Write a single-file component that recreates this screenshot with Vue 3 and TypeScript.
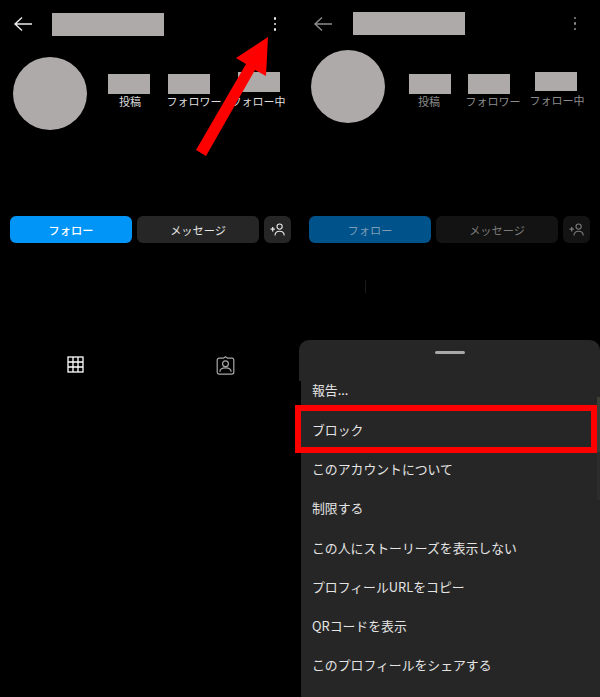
<script setup lang="ts">
interface Panel {
  key: string
  stats: string[]
}
const labels = ['投稿', 'フォロワー', 'フォロー中']
const panels: Panel[] = [
  { key: 'active', stats: labels },
  { key: 'dimmed', stats: labels },
]
const menu = [
  '報告...',
  'ブロック',
  'このアカウントについて',
  '制限する',
  'この人にストーリーズを表示しない',
  'プロフィールURLをコピー',
  'QRコードを表示',
  'このプロフィールをシェアする',
]
</script>

<template>
  <div class="page">
    <section v-for="panel in panels" :key="panel.key" class="panel" :class="panel.key">
      <header class="header">
        <svg class="back" width="20" height="16" viewBox="0 0 20 16" fill="none">
          <path d="M19 8H2M9 1.400 2 8l7 6.600" stroke="currentColor" stroke-width="1.400" />
        </svg>
        <div class="mask title"></div>
        <div class="kebab"><i></i><i></i><i></i></div>
      </header>

      <div class="profile">
        <div class="avatar"></div>
        <div class="stats">
          <div v-for="label in panel.stats" :key="label" class="stat">
            <div class="mask count"></div>
            <span>{{ label }}</span>
          </div>
        </div>
      </div>

      <div class="actions">
        <button class="btn primary">フォロー</button>
        <button class="btn">メッセージ</button>
        <button class="btn icon" aria-label="add">
          <svg width="16" height="14" viewBox="0 0 16 14" fill="none" stroke="currentColor" stroke-width="1.1">
            <path d="M.5 6.200h4.400M2.700 4v4.400" stroke-width="1.300" />
            <circle cx="9.600" cy="3.600" r="2.600" />
            <path d="M5 12.600c0-3 2-4.400 4.600-4.400s4.600 1.400 4.600 4.400" />
          </svg>
        </button>
      </div>

      <nav v-if="panel.key === 'active'" class="tabs">
        <div class="tab">
          <svg width="17" height="17" viewBox="0 0 17 17" fill="none" stroke="#fff" stroke-width="1.300">
            <rect x="1" y="1" width="15" height="15" />
            <path d="M6 1v15M11 1v15M1 6h15M1 11h15" />
          </svg>
        </div>
        <div class="tab">
          <svg width="19" height="19" viewBox="0 0 19 19" fill="none" stroke="#a8a8a8" stroke-width="1.200">
            <path d="M7.400 2.200 9.500.8l2.100 1.400h4.200a2 2 0 0 1 2 2v11.900a2 2 0 0 1-2 2H3.200a2 2 0 0 1-2-2V4.200a2 2 0 0 1 2-2z" />
            <circle cx="9.500" cy="7.800" r="2.900" />
            <path d="M3.900 15.800c0-2.700 2.200-4 5.600-4s5.600 1.300 5.600 4" />
          </svg>
        </div>
      </nav>

      <template v-else>
        <div class="tick"></div>
        <div class="sheet">
          <div class="sheet-head"><div class="handle"></div></div>
          <ul class="menu">
            <li v-for="(item, index) in menu" :key="item" class="menu-item">
              {{ item }}
              <div v-if="index === 1" class="highlight"></div>
            </li>
            <li class="scrollbar"></li>
          </ul>
        </div>
      </template>
    </section>

    <svg class="arrow" width="90" height="130" viewBox="190 30 90 130">
      <polygon fill="#ff0000" points="268,37 236,58 246,64 196,150 206,156 255,70 266,76" />
    </svg>
  </div>
</template>

<style>
html, body { margin: 0; background: #000; }
</style>

<style scoped>
.page {
  position: relative;
  display: grid;
  grid-template-columns: 300px 300px;
  width: 600px;
  height: 697px;
  overflow: hidden;
  background: #000;
  color: #fff;
  font-family: "Noto Sans CJK JP", "Noto Sans", sans-serif;
}
.panel { display: flex; flex-direction: column; min-width: 0; }

.header { display: flex; align-items: center; box-sizing: border-box; height: 48px; }
.back { flex: none; }
.mask { background: #aeaaa9; }
.title { flex: none; width: 112px; height: 23px; }
.kebab { display: flex; flex-direction: column; gap: 3px; margin-left: auto; }
.kebab i { display: block; width: 2.400px; height: 2.400px; border-radius: 50%; background: currentColor; }

.profile { display: flex; height: 74px; }
.avatar { flex: none; width: 74px; height: 73px; border-radius: 50%; background: #aeaaa9; }
.stats { display: grid; grid-template-columns: repeat(3, 60px); column-gap: 4px; height: 50px; }
.stat { display: flex; flex-direction: column; align-items: center; height: 42px; font-size: 11px; line-height: 14px; white-space: nowrap; color: #dedede; }
.count { flex: none; width: 42px; height: 20px; }

.actions { display: flex; gap: 5px; }
.btn {
  flex: none;
  width: 122px;
  height: 27px;
  padding: 0;
  border: 0;
  border-radius: 6px;
  background: #262626;
  color: #e6e6e6;
  font: 400 11.200px/26px "Noto Sans CJK JP", sans-serif;
}
.btn.icon { display: flex; align-items: center; justify-content: center; width: 27px; }
.btn.primary { background: #0095f6; color: #fff; font-weight: 500; }

/* left, undimmed screen */
.active { color: #ececec; }
.active .header { padding: 0 24px 0 14px; }
.active .back { margin-right: 19px; margin-left: -1px; }
.active .profile { margin: 9px 0 0 13px; }
.active .stats { margin: 17px 0 0 13px; }
.active .stat:nth-child(1) .count { margin-left: -1px; margin-right: 1px; }
.active .stat:nth-child(2) .count { margin-right: 10px; }
.active .stat:nth-child(3) { margin-top: -2px; }
.active .stat:nth-child(3) .count { margin-left: 2px; margin-bottom: 2px; }
.active .actions { margin: 85px 0 0 10px; }
.tabs { display: grid; grid-template-columns: 150px 150px; margin-top: 113px; }
.tab { display: flex; justify-content: center; height: 19px; }

/* right, dimmed screen */
.dimmed { color: #8c8c8c; }
.dimmed .stat { color: #8c8c8c; }
.dimmed .header { align-items: flex-start; padding: 12px 24px 0 13px; }
.dimmed .back { margin: 4px 20px 0 0; }
.dimmed .kebab { margin-top: 5px; }
.dimmed .profile { margin: 2px 0 0 11px; }
.dimmed .stats { margin: 24px 0 0 14px; }
.dimmed .stat:nth-child(1) .count { margin-left: 2px; }
.dimmed .stat:nth-child(2) .count { margin-right: 8px; }
.dimmed .stat:nth-child(3) { margin-top: -2px; }
.dimmed .stat:nth-child(3) .count { margin-right: 2px; margin-bottom: 2px; height: 19px; }
.dimmed .actions { margin: 92px 0 0 9px; }
.dimmed .btn { background: #131313; color: #7a7a7a; }
.dimmed .btn.primary { background: #00528a; color: #7f9db3; font-weight: 400; }
.tick { width: 1px; height: 13px; margin: 37px 0 0 65px; background: #1a1a1a; }

.sheet { flex: 1; margin: 47px 0 0 -1px; }
.sheet-head { display: flex; justify-content: center; height: 41px; padding-top: 10.500px; box-sizing: border-box; border-radius: 10px 10px 0 0; background: #262626; }
.handle { width: 30px; height: 3px; border-radius: 2px; background: #a8a8a8; }
.menu {
  position: relative;
  height: 400px;
  margin: -10.600px 0 0 2px;
  padding: 0;
  list-style: none;
  background: #262626;
}
.menu-item {
  position: relative;
  height: 39.300px;
  padding-left: 11px;
  color: #e4e4e4;
  font-size: 12.850px;
  line-height: 40px;
  white-space: nowrap;
}
.highlight {
  position: absolute;
  top: -4.600px;
  left: -6px;
  box-sizing: border-box;
  width: 302px;
  height: 48px;
  border: 6px solid #ff0000;
}
.scrollbar { position: absolute; top: 27px; right: 0; width: 3px; height: 103px; background: linear-gradient(#3a3f38 0 55px, #2c2c2c 55px); }
.arrow { position: absolute; top: 30px; left: 190px; }
</style>
